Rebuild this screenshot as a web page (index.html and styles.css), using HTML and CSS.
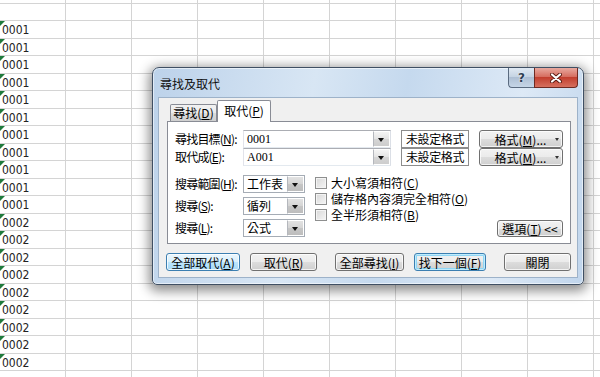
FILE: index.html
```html
<!doctype html>
<html>
<head>
<meta charset="utf-8">
<title>尋找及取代</title>
<link rel="stylesheet" href="styles.css">
</head>
<body>
	<div class="sheet">
		<div class="row"></div>
		<div class="row"></div>
		<div class="row"><div class="cell">0001</div></div>
		<div class="row"><div class="cell">0001</div></div>
		<div class="row"><div class="cell">0001</div></div>
		<div class="row"><div class="cell">0001</div></div>
		<div class="row"><div class="cell">0001</div></div>
		<div class="row"><div class="cell">0001</div></div>
		<div class="row"><div class="cell">0001</div></div>
		<div class="row"><div class="cell">0001</div></div>
		<div class="row"><div class="cell">0001</div></div>
		<div class="row"><div class="cell">0001</div></div>
		<div class="row"><div class="cell">0001</div></div>
		<div class="row"><div class="cell">0002</div></div>
		<div class="row"><div class="cell">0002</div></div>
		<div class="row"><div class="cell">0002</div></div>
		<div class="row"><div class="cell">0002</div></div>
		<div class="row"><div class="cell">0002</div></div>
		<div class="row"><div class="cell">0002</div></div>
		<div class="row"><div class="cell">0002</div></div>
		<div class="row"><div class="cell">0002</div></div>
		<div class="row"><div class="cell">0002</div></div>
		<div class="row"></div>
	</div>

	<div class="dialog">
		<div class="titlebar">
			<span class="title">尋找及取代</span>
			<div class="caption">
				<span class="cap-help">?</span>
				<span class="cap-close">
					<svg width="12" height="10" viewBox="0 0 12 10">
						<path d="M2 1.5 L10 8.5 M10 1.5 L2 8.5" stroke="#5a1a12" stroke-width="4" stroke-linecap="round"/>
						<path d="M2 1.5 L10 8.5 M10 1.5 L2 8.5" stroke="#fff" stroke-width="2.2" stroke-linecap="round"/>
					</svg>
				</span>
			</div>
		</div>

		<div class="client">
			<div class="tabs">
				<span class="tab">尋找(<u>D</u>)</span>
				<span class="tab active">取代(<u>P</u>)</span>
			</div>

			<div class="panel">
				<div class="field">
					<label>尋找目標(<u>N</u>):</label>
					<div class="combo edit"><span>0001</span><i class="arrow"></i></div>
					<div class="fmt">未設定格式</div>
					<button class="btn fmt-btn">格式(<u>M</u>)...<i class="drop"></i></button>
				</div>
				<div class="field">
					<label>取代成(<u>E</u>):</label>
					<div class="combo edit"><span>A001</span><i class="arrow"></i></div>
					<div class="fmt">未設定格式</div>
					<button class="btn fmt-btn">格式(<u>M</u>)...<i class="drop"></i></button>
				</div>

				<div class="options">
					<div class="selects">
						<div class="field">
							<label>搜尋範圍(<u>H</u>):</label>
							<div class="combo list"><span>工作表</span><i class="arrow"></i></div>
						</div>
						<div class="field">
							<label>搜尋(<u>S</u>):</label>
							<div class="combo list"><span>循列</span><i class="arrow"></i></div>
						</div>
						<div class="field">
							<label>搜尋(<u>L</u>):</label>
							<div class="combo list"><span>公式</span><i class="arrow"></i></div>
						</div>
					</div>
					<div class="checks">
						<div class="check"><i class="box"></i>大小寫須相符(<u>C</u>)</div>
						<div class="check"><i class="box"></i>儲存格內容須完全相符(<u>O</u>)</div>
						<div class="check"><i class="box"></i>全半形須相符(<u>B</u>)</div>
					</div>
					<button class="btn opts">選項(<u>T</u>) &lt;&lt;</button>
				</div>
			</div>

			<div class="actions">
				<button class="btn default w-all">全部取代(<u>A</u>)</button>
				<button class="btn w-one">取代(<u>R</u>)</button>
				<button class="btn w-find wide">全部尋找(<u>I</u>)</button>
				<button class="btn focus w-next">找下一個(<u>F</u>)</button>
				<button class="btn w-close wide">關閉</button>
			</div>
		</div>
	</div>
</body>
</html>
```

FILE: styles.css
```css
*{
	margin:0;
	padding:0;
	box-sizing:border-box;
}
body{
	background:#fff;
	width:600px;
	height:377px;
	overflow:hidden;
	position:relative;
	font-family:"Noto Sans CJK TC","Noto Sans",sans-serif;
	font-size:12px;
	color:#000;
}

/* worksheet */
.sheet{
	margin-top:-14px;
}
.row{
	height:18px;
	border-bottom:1px solid #d4d4d4;
	background:repeating-linear-gradient(to right,transparent 0,transparent 65px,#d4d4d4 65px,#d4d4d4 66px);
}
.row:nth-child(even){
	height:17px;
}
.cell{
	position:relative;
	width:65px;
	height:100%;
	padding:1px 0 0 2px;
	font-family:"DejaVu Sans Condensed","Liberation Sans",sans-serif;
	font-size:12px;
	line-height:17px;
	color:#222;
	background:#fff;
}
.cell::before{
	content:"";
	position:absolute;
	left:0;
	top:0;
	border-top:5px solid #1f7a3c;
	border-right:5px solid transparent;
}

/* dialog frame */
.dialog{
	position:absolute;
	left:152px;
	top:67px;
	width:432px;
	height:218px;
	padding:0 5px 6px 5px;
	border:1px solid #3f4f63;
	border-radius:7px 7px 5px 5px;
	background:linear-gradient(100deg,#bcd2ea 0%,#d8e6f4 35%,#c5d9ee 55%,#dde9f6 80%,#c0d5ec 100%);
	box-shadow:inset 0 0 0 1px rgba(255,255,255,.55),0 3px 12px 3px rgba(0,0,0,.45);
}
.titlebar{
	height:29px;
	display:flex;
	justify-content:space-between;
	align-items:flex-start;
}
.title{
	margin:8px 0 0 2px;
	line-height:15px;
	color:#111;
}
.caption{
	display:flex;
	height:20px;
}
.cap-help,.cap-close{
	display:flex;
	align-items:center;
	justify-content:center;
	height:20px;
	border:1px solid #5a6b80;
	border-top:none;
}
.cap-help{
	width:26px;
	border-radius:0 0 0 4px;
	border-right:none;
	background:linear-gradient(#dfe8f2,#c3d2e2 50%,#aebfd4 50%,#c6d6e7);
	font-family:"DejaVu Sans",sans-serif;
	font-weight:bold;
	font-size:12px;
	color:#2e3e52;
	text-shadow:0 0 2px #fff;
}
.cap-close{
	width:44px;
	border-color:#6e2a22;
	border-radius:0 0 4px 0;
	background:linear-gradient(#e8a99f,#d4685a 50%,#c23f2f 50%,#d6705f);
}

/* client area */
.client{
	height:181px;
	border:1px solid #9db2c9;
	background:#f0f0f0;
}
.tabs{
	display:flex;
	align-items:flex-end;
	height:23px;
	margin-left:8px;
	padding-top:2px;
}
.tab{
	height:17px;
	margin-left:3px;
	width:47px;
	border:1px solid #898c95;
	border-bottom:none;
	border-radius:2px 2px 0 0;
	background:linear-gradient(#f2f2f2,#ebebeb 50%,#dddddd 50%,#cfcfcf);
	line-height:15px;
	text-align:center;
	white-space:nowrap;
}
.tab.active{
	position:relative;
	z-index:1;
	height:22px;
	width:54px;
	margin-left:0;
	margin-bottom:-1px;
	background:#fff;
	line-height:19px;
}
.panel{
	width:404px;
	margin-left:8px;
	padding:8px 7px 6px 7px;
	border:1px solid #898c95;
	background:#fff;
}
.field{
	display:flex;
	align-items:center;
	height:18px;
}
.field label{
	flex:none;
	width:68px;
	line-height:16px;
	white-space:nowrap;
	letter-spacing:-0.8px;
}
.combo{
	flex:none;
	display:flex;
	height:18px;
	border:1px solid #abadb3;
	background:#fff;
	line-height:16px;
}
.combo span{
	flex:1;
	padding-left:3px;
}
.combo.edit{
	width:148px;
	border-color:#abadb3 #dbdfe6 #e3e9ef #e2e3ea;
	font-family:"Liberation Serif",serif;
}
.combo.list{
	width:62px;
	border-color:#a5acb5;
}
.arrow{
	width:17px;
	border:1px solid #fff;
	border-left:1px solid #b4b7bd;
	background:linear-gradient(#f4f4f4,#e4e4e4 50%,#d6d6d6 50%,#cdcdcd);
	position:relative;
}
.combo.list .arrow{
	background:linear-gradient(#e2e2e2,#d4d4d4 50%,#c6c6c6 50%,#bdbdbd);
}
.arrow::after{
	content:"";
	position:absolute;
	left:4px;
	top:6px;
	border-top:4px solid #111;
	border-left:3.5px solid transparent;
	border-right:3.5px solid transparent;
}
.fmt{
	flex:none;
	width:68px;
	height:18px;
	margin-left:10px;
	padding-left:4px;
	border:1px solid #8d8d8d;
	background:#fff;
	line-height:16px;
	white-space:nowrap;
	overflow:hidden;
	letter-spacing:-0.4px;
}
.btn{
	height:18px;
	border:1px solid #707070;
	border-radius:3px;
	background:linear-gradient(#f2f2f2,#ebebeb 50%,#dddddd 50%,#cfcfcf);
	box-shadow:inset 0 0 0 1px rgba(255,255,255,.75);
	font-family:inherit;
	font-size:12px;
	line-height:15px;
	color:#000;
	white-space:nowrap;
}
.fmt-btn{
	flex:none;
	width:84px;
	margin-left:10px;
	padding-left:12px;
	display:flex;
	align-items:center;
	justify-content:center;
}
.drop{
	margin-left:9px;
	border-top:3px solid #333;
	border-left:2px solid transparent;
	border-right:2px solid transparent;
}
.options{
	display:flex;
	margin-top:9px;
}
.selects{
	display:flex;
	flex-direction:column;
	gap:4px;
}
.checks{
	margin-left:10px;
}
.check{
	display:flex;
	align-items:flex-start;
	height:16px;
	line-height:15px;
	white-space:nowrap;
}
.box{
	flex:none;
	width:12px;
	height:12px;
	margin:2px 4px 0 0;
	border:1px solid #8e8f8f;
	background:linear-gradient(135deg,#d8d8d8,#f6f6f6);
	box-shadow:inset 0 0 0 1px #f4f4f4;
}
.opts{
	width:66px;
	margin-left:auto;
	align-self:flex-end;
	height:17px;
}

/* bottom buttons */
.actions{
	display:flex;
	gap:10px;
	margin-top:9px;
	padding-left:7px;
}
.actions .btn{
	height:18px;
}
.actions .wide{
	margin-left:8px;
}
.w-all{ width:74px; }
.w-one{ width:67px; }
.w-find{ width:69px; }
.w-next{ width:72px; }
.w-close{ width:67px; }
.btn.default{
	border-color:#3c7fb1;
	background:linear-gradient(#eaf6fd,#d9f0fc 50%,#bee6fd 50%,#a7d9f5);
}
.btn.focus{
	border-color:#3c7fb1;
	box-shadow:inset 0 0 0 1px #c0ecfd,inset 0 0 0 2px #8fd6f5;
}
```
